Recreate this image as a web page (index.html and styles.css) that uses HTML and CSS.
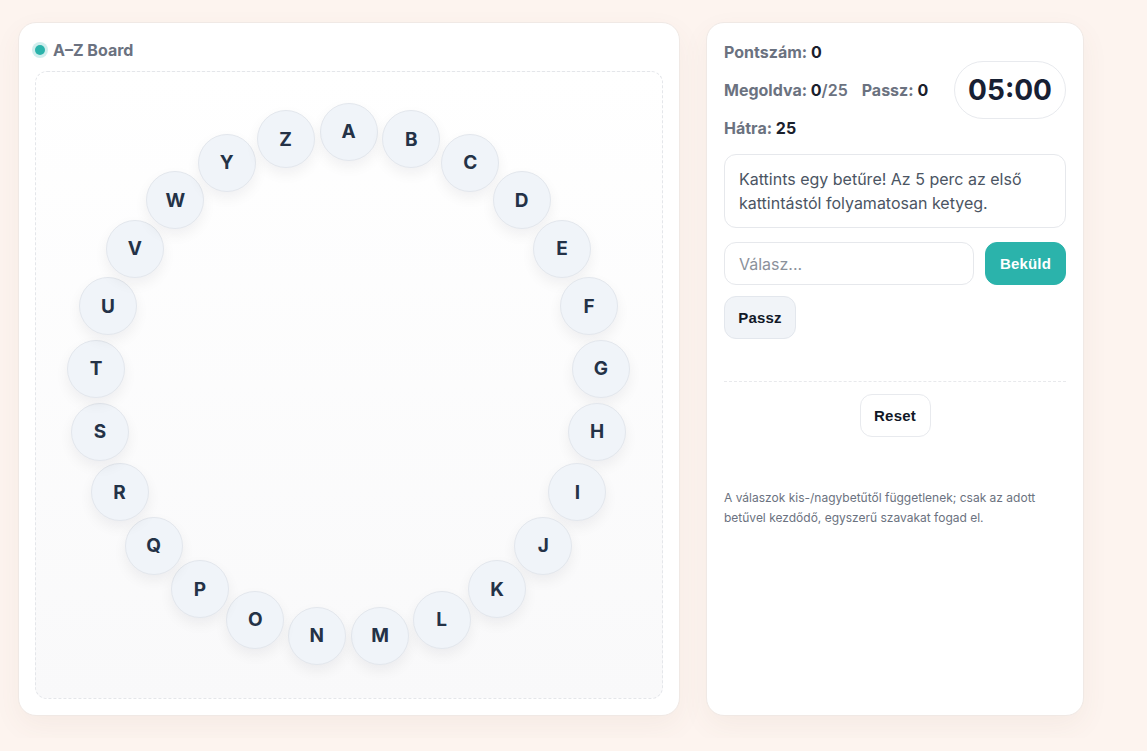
FILE: index.html
```html
<!DOCTYPE html>
<html lang="hu">
<head>
<meta charset="utf-8">
<title>A–Z Board</title>
<link rel="stylesheet" href="styles.css">
</head>
<body>
<main class="layout">
  <section class="card board-card">
    <header class="board-head">
      <span class="dot"></span>
      <span class="board-title">A–Z Board</span>
    </header>
    <div class="board">
      <button class="letter" style="left:283.5px;top:30.5px">A</button>
      <button class="letter" style="left:346.4px;top:38.4px">B</button>
      <button class="letter" style="left:405.4px;top:61.8px">C</button>
      <button class="letter" style="left:456.7px;top:99.1px">D</button>
      <button class="letter" style="left:497.1px;top:147.9px">E</button>
      <button class="letter" style="left:524.1px;top:205.3px">F</button>
      <button class="letter" style="left:536px;top:267.6px">G</button>
      <button class="letter" style="left:532px;top:330.9px">H</button>
      <button class="letter" style="left:512.4px;top:391.2px">I</button>
      <button class="letter" style="left:478.4px;top:444.8px">J</button>
      <button class="letter" style="left:432.2px;top:488.2px">K</button>
      <button class="letter" style="left:376.6px;top:518.7px">L</button>
      <button class="letter" style="left:315.2px;top:534.5px">M</button>
      <button class="letter" style="left:251.8px;top:534.5px">N</button>
      <button class="letter" style="left:190.4px;top:518.7px">O</button>
      <button class="letter" style="left:134.8px;top:488.2px">P</button>
      <button class="letter" style="left:88.6px;top:444.8px">Q</button>
      <button class="letter" style="left:54.6px;top:391.2px">R</button>
      <button class="letter" style="left:35px;top:330.9px">S</button>
      <button class="letter" style="left:31px;top:267.6px">T</button>
      <button class="letter" style="left:42.9px;top:205.3px">U</button>
      <button class="letter" style="left:69.9px;top:147.9px">V</button>
      <button class="letter" style="left:110.3px;top:99.1px">W</button>
      <button class="letter" style="left:161.6px;top:61.8px">Y</button>
      <button class="letter" style="left:220.6px;top:38.4px">Z</button>
    </div>
  </section>

  <aside class="card side-card">
    <div class="stats-row">
      <div class="stats">
        <div class="stat"><span class="label">Pontszám:</span> <b>0</b></div>
        <div class="stat"><span class="label">Megoldva:</span> <b>0</b><span class="muted">/25</span><span class="label gap">Passz:</span> <b>0</b></div>
        <div class="stat"><span class="label">Hátra:</span> <b>25</b></div>
      </div>
      <div class="timer">05:00</div>
    </div>

    <div class="message">Kattints egy betűre! Az 5 perc az első kattintástól folyamatosan ketyeg.</div>

    <div class="answer-row">
      <input class="answer" type="text" placeholder="Válasz...">
      <button class="btn btn-primary">Beküld</button>
    </div>

    <div class="pass-row">
      <button class="btn btn-soft">Passz</button>
    </div>

    <div class="divider"></div>

    <div class="reset-row">
      <button class="btn btn-outline">Reset</button>
    </div>

    <p class="note">A válaszok kis-/nagybetűtől függetlenek; csak az adott betűvel kezdődő, egyszerű szavakat fogad el.</p>
  </aside>
</main>
</body>
</html>
```

FILE: styles.css
```css
* { box-sizing: border-box; }

html, body {
  margin: 0;
  background: #fdf4ef;
}

body {
  padding: 22px 18px;
  font-family: Inter, "Noto Sans", "Liberation Sans", sans-serif;
  color: #1f2937;
}

.layout {
  display: grid;
  grid-template-columns: 662px 378px;
  gap: 26px;
  align-items: stretch;
}

.card {
  background: #ffffff;
  border: 1px solid #f0e9e5;
  border-radius: 18px;
  box-shadow: 0 10px 28px rgba(120, 80, 60, 0.06);
}

.board-card {
  padding: 16px;
}

.board-head {
  display: flex;
  align-items: center;
  gap: 8px;
  height: 22px;
}

.dot {
  width: 10px;
  height: 10px;
  border-radius: 50%;
  background: #2bb3ab;
  box-shadow: 0 0 0 3px rgba(43, 179, 171, 0.22);
}

.board-title {
  font-size: 16px;
  font-weight: 700;
  color: #6b7280;
}

.board {
  position: relative;
  margin-top: 10px;
  width: 628px;
  height: 628px;
  border: 1px dashed #e4e6ea;
  border-radius: 12px;
  background: linear-gradient(180deg, #ffffff 0%, #f9f9fa 100%);
}

.letter {
  position: absolute;
  width: 58px;
  height: 58px;
  border-radius: 50%;
  border: 1px solid #e3e7ed;
  background: #f0f4f9;
  box-shadow: 0 6px 14px rgba(15, 23, 42, 0.06);
  font-family: Inter, "Noto Sans", sans-serif;
  font-size: 19px;
  font-weight: 700;
  color: #243247;
  display: flex;
  align-items: center;
  justify-content: center;
  padding: 0;
  cursor: pointer;
}

.side-card {
  padding: 17px;
  display: flex;
  flex-direction: column;
}

.stats-row {
  display: flex;
  align-items: center;
  justify-content: space-between;
}

.stats {
  display: flex;
  flex-direction: column;
  gap: 14px;
}

.stat {
  font-size: 16px;
  line-height: 24px;
  font-weight: 700;
  color: #111827;
  white-space: nowrap;
}

.stat b { font-weight: 700; color: #1a202c; }

.label { color: #6b7280; }
.muted { color: #6b7280; font-weight: 600; }
.label.gap { margin-left: 14px; }

.timer {
  border: 1px solid #e8eaee;
  border-radius: 999px;
  padding: 10px 13px;
  font-size: 28px;
  line-height: 36px;
  font-weight: 700;
  color: #172033;
}

.message {
  margin-top: 14px;
  border: 1px solid #e6e8ec;
  border-radius: 12px;
  padding: 12px 14px;
  font-size: 16px;
  line-height: 24px;
  color: #4b5563;
}

.answer-row {
  margin-top: 14px;
  display: flex;
  gap: 11px;
}

.answer {
  flex: 1;
  min-width: 0;
  height: 43px;
  border: 1px solid #e6e8ec;
  border-radius: 12px;
  padding: 0 14px;
  font-family: Inter, "Noto Sans", sans-serif;
  font-size: 16px;
  color: #1f2937;
  outline: none;
}

.answer::placeholder { color: #8b919b; }

.btn {
  height: 43px;
  border-radius: 12px;
  font-family: "Liberation Sans", Arial, sans-serif;
  font-size: 15px;
  font-weight: 700;
  letter-spacing: 0.2px;
  padding: 0 10px;
  cursor: pointer;
}

.btn-primary {
  width: 81px;
  background: #2bb3ab;
  border: 1px solid #2bb3ab;
  color: #ffffff;
}

.pass-row {
  margin-top: 11px;
  display: flex;
}

.btn-soft {
  width: 72px;
  background: #f1f4f8;
  border: 1px solid #e3e7ed;
  color: #111827;
}

.divider {
  margin-top: 42px;
  border-top: 1px dashed #e8e9ec;
}

.reset-row {
  margin-top: 12px;
  display: flex;
  justify-content: center;
}

.btn-outline {
  width: 71px;
  background: #ffffff;
  border: 1px solid #e8eaee;
  color: #111827;
}

.note {
  margin: 51px 0 0;
  font-size: 12px;
  line-height: 20px;
  color: #6b7280;
}
```
